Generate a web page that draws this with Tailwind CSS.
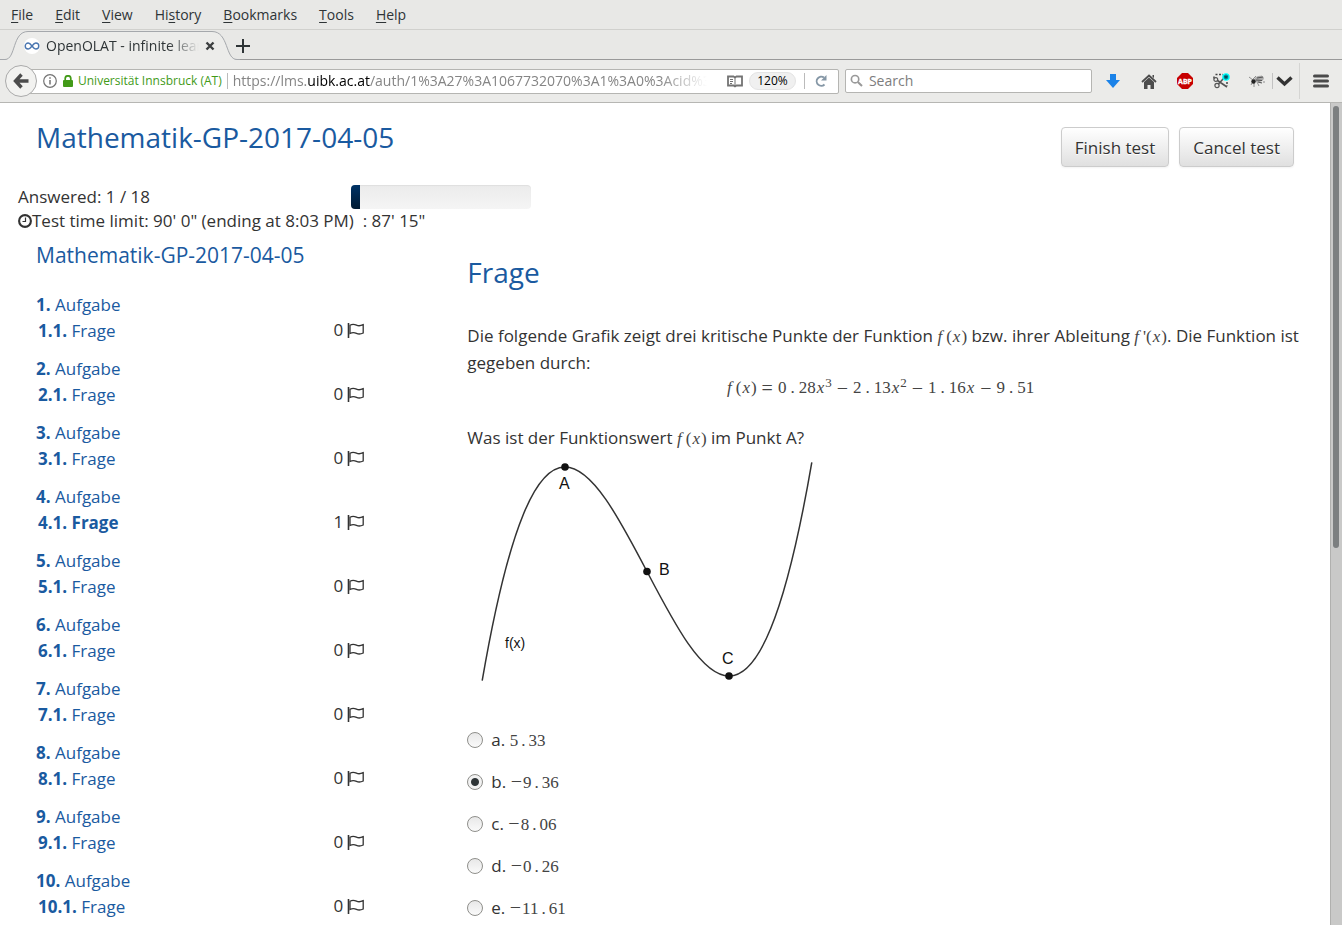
<!DOCTYPE html>
<html lang="en">

<head>
    <meta charset="UTF-8">
    <meta name="viewport" content="width=device-width, initial-scale=1.0">
    <title>OpenOLAT - infinite learning</title>
    <script src="https://cdn.jsdelivr.net/npm/@tailwindcss/browser@4"></script>
</head>

<body class="h-screen flex flex-col overflow-hidden bg-white font-['Open_Sans','Noto_Sans',sans-serif] text-[17px] text-[#333]">
    <!-- Shared icons -->
    <svg class="hidden">
        <symbol id="flag" viewBox="0 0 17 15">
            <path d="M1.5 0v15" stroke="#333" stroke-width="1.6" fill="none" />
            <path d="M3 2.2c3-1.6 4.6-.9 6.5 0s4 .8 6.700-.5v8.300c-2.700 1.300-4.800 1.300-6.700.4s-3.500-1.500-6.500.1z" stroke="#333" stroke-width="1.3" fill="none" />
        </symbol>
    </svg>

    <!-- Browser window -->
    <div class="shrink-0 bg-[#e8e8e6] text-sm text-[#2e3436]">
        <nav class="flex h-[30px] items-center gap-[22px] border-b border-[#d0d0cd] px-[11px]">
            <a href="#"><u class="underline-offset-2">F</u>ile</a>
            <a href="#"><u class="underline-offset-2">E</u>dit</a>
            <a href="#"><u class="underline-offset-2">V</u>iew</a>
            <a href="#">Hi<u class="underline-offset-2">s</u>tory</a>
            <a href="#"><u class="underline-offset-2">B</u>ookmarks</a>
            <a href="#"><u class="underline-offset-2">T</u>ools</a>
            <a href="#"><u class="underline-offset-2">H</u>elp</a>
        </nav>

        <!-- Tabs -->
        <div class="relative flex h-[30px] items-center border-b border-[#999] pt-[2px]">
            <svg class="absolute left-0 top-0" width="240" height="30" viewBox="0 0 240 30">
                <path d="M0 29.5H5C16 29.5 12 1.5 28 1.5H212C229 1.5 225 29.5 237 29.5V30H0z" fill="#ececea" />
                <path d="M0 29.5H5C16 29.5 12 1.5 28 1.5H212C229 1.5 225 29.5 237 29.5H240" fill="none" stroke="#a5a8ac" />
            </svg>
            <div class="relative flex w-[226px] items-center pl-6">
                <svg width="16" height="16" viewBox="0 0 16 16">
                    <circle cx="8" cy="8" r="8" fill="#fff" />
                    <path d="M8 8C6.5 6 5.5 5 4.2 5a3 3 0 0 0 0 6C5.5 11 6.5 10 8 8s2.5-3 3.8-3a3 3 0 0 1 0 6C10.5 11 9.500 10 8 8z" fill="none" stroke="#4a76b0" stroke-width="1.4" />
                </svg>
                <span class="ml-[6px] w-[153px] overflow-hidden whitespace-nowrap mask-r-from-80%">OpenOLAT - infinite learning</span>
                <button class="ml-[6px]" aria-label="Close tab">
                    <svg width="10" height="10" viewBox="0 0 10 10"><path d="M1.5 1.5l7 7M8.5 1.5l-7 7" stroke="#3c3f40" stroke-width="2.4" /></svg>
                </button>
            </div>
            <button class="ml-[10px]" aria-label="New tab">
                <svg width="14" height="14" viewBox="0 0 14 14"><path d="M7 0v14M0 7h14" stroke="#2e3436" stroke-width="2" /></svg>
            </button>
        </div>

        <!-- Toolbar -->
        <div class="flex h-[43px] items-center border-b border-[#b6b6b3] bg-[#ebebe9] pr-[13px]">
            <button class="relative z-10 ml-[5px] flex size-8 items-center justify-center rounded-full border border-[#aaa] bg-[#f2f2f0]" aria-label="Back">
                <svg width="16" height="16" viewBox="0 0 16 16"><path d="M8.5 1.5L2.5 8l6 6.5M3 8h12.5" fill="none" stroke="#4c4c4c" stroke-width="3.4" /></svg>
            </button>
            <div class="-ml-2 flex h-[25px] min-w-0 flex-1 items-center rounded-r-xs border border-[#b5b5b2] bg-white pl-[13px] pr-[11px]">
                <svg class="shrink-0" width="14" height="14" viewBox="0 0 14 14">
                    <circle cx="7" cy="7" r="6.3" fill="none" stroke="#737373" stroke-width="1.2" />
                    <path d="M7 6v4.5M7 3.3v1.5" stroke="#737373" stroke-width="1.5" />
                </svg>
                <svg class="ml-[6px] shrink-0" width="10" height="12" viewBox="0 0 10 12">
                    <path d="M2.2 6V3.6a2.8 2.8 0 0 1 5.6 0V6" fill="none" stroke="#429a18" stroke-width="1.7" />
                    <rect y="5" width="10" height="7" rx="1" fill="#429a18" />
                </svg>
                <span class="ml-[5px] whitespace-nowrap text-xs text-[#429a18]">Universität Innsbruck (AT)</span>
                <span class="ml-[5px] h-4 w-px shrink-0 bg-[#bbb]"></span>
                <div role="textbox" aria-label="Address" class="ml-[5px] min-w-0 flex-1 overflow-hidden whitespace-nowrap text-[#858585] mask-r-from-90%">https://lms.<span class="text-black">uibk.ac.at</span>/auth/1%3A27%3A1067732070%3A1%3A0%3Acid%3Adefault</div>
                <button class="ml-5 shrink-0" aria-label="Reader view">
                    <svg width="16" height="13" viewBox="0 0 16 13">
                        <path d="M1 1.5h5.5L8 2.500l1.500-1H15v9H9.500L8 11.500l-1.500-1H1z" fill="#fff" stroke="#737373" stroke-width="1.8" />
                        <path d="M8 2v9M3 4.500h3M3 6.500h3M3 8.500h2" stroke="#737373" stroke-width="1" />
                    </svg>
                </button>
                <button class="ml-[6px] h-[18px] w-[47px] shrink-0 rounded-full border border-[#e4e4e4] bg-[#f0f0f0] text-xs leading-4 text-black">120%</button>
                <span class="ml-2 h-4 w-px shrink-0 bg-[#bbb]"></span>
                <button class="ml-[10px] shrink-0" aria-label="Reload">
                    <svg width="12" height="12" viewBox="0 0 12 12">
                        <path d="M9.5 9.5A4.6 4.6 0 1 1 9 2.5" fill="none" stroke="#8597a6" stroke-width="1.9" />
                        <path d="M11.5 0v5.5H6z" fill="#8597a6" />
                    </svg>
                </button>
            </div>
            <div class="ml-[6px] flex h-6 w-[247px] items-center gap-[6px] rounded-xs border border-[#b5b5b2] bg-white pl-1">
                <svg width="14" height="14" viewBox="0 0 14 14">
                    <circle cx="5.5" cy="5" r="4" fill="none" stroke="#999" stroke-width="1.8" />
                    <path d="M8.5 8l4.5 4.5" stroke="#999" stroke-width="2.2" />
                </svg>
                <input type="text" aria-label="Search" placeholder="Search" class="w-full outline-none placeholder:text-[#7d7d7d]">
            </div>
            <button class="ml-[14px]" aria-label="Downloads">
                <svg width="14" height="14" viewBox="0 0 14 14"><path d="M4 0h6v6h4l-7 8-7-8h4z" fill="#1a82e8" /></svg>
            </button>
            <button class="ml-[21px]" aria-label="Home">
                <svg width="16" height="15" viewBox="0 0 16 15">
                    <path d="M1 8l7-6.5L15 8" fill="none" stroke="#4c4c4c" stroke-width="1.8" />
                    <path d="M3 8l5-4.5L13 8v7H9.500v-4h-3v4H3zM11.500 1H13v3l-1.500-1z" fill="#4c4c4c" />
                </svg>
            </button>
            <button class="ml-5" aria-label="Adblock Plus">
                <svg width="16" height="16" viewBox="0 0 16 16">
                    <path d="M5 0h6l5 5v6l-5 5H5l-5-5V5z" fill="#c70000" />
                    <text x="8" y="11" text-anchor="middle" font-family="Noto Sans" font-size="7" font-weight="bold" fill="#fff" stroke="#fff" stroke-width=".3">ABP</text>
                </svg>
            </button>
            <button class="ml-5" aria-label="Screenshot">
                <svg width="17" height="16" viewBox="0 0 17 16">
                    <path d="M2.5 1.5H10M1 3.5v3M14 9v4" stroke="#444" stroke-width="1.5" stroke-dasharray="2 1.5" />
                    <circle cx="2.8" cy="6.5" r="1.9" fill="none" stroke="#555" stroke-width="1.2" />
                    <circle cx="4" cy="12.5" r="2.1" fill="none" stroke="#555" stroke-width="1.2" />
                    <path d="M4.5 7.5l9.500 6.500M5.500 11l5-5.500" stroke="#555" stroke-width="1.6" />
                    <circle cx="13" cy="4" r="3.8" fill="#0ff" />
                    <path d="M13 1.500v5M10.800 2.700l4.400 2.600M10.800 5.300l4.400-2.600" stroke="#064a5a" stroke-width="1.2" />
                </svg>
            </button>
            <button class="ml-[19px]" aria-label="Firebug">
                <svg width="16" height="14" viewBox="0 0 16 14">
                    <path d="M0 3l4 3M3 9l-1 2M5 9v4M8 8l2 4M4 5l3-3M8 4l5-2M14 8h2" stroke="#777" stroke-width=".8" />
                    <ellipse cx="10" cy="5" rx="5" ry="3" transform="rotate(-15 10 5)" fill="#aaa" />
                    <circle cx="4.5" cy="7.500" r="2.2" fill="#222" />
                    <path d="M7 6l6 .5M8 4l6-1M9 8l4 1" stroke="#555" stroke-width="1.1" />
                </svg>
            </button>
            <button class="ml-[7px] flex h-4 items-center border-l border-[#c2c2c2] pl-[3px]" aria-label="Firebug menu">
                <svg width="17" height="11" viewBox="0 0 17 11"><path d="M1.5 1.5l7 6.5 7-6.5" fill="none" stroke="#333" stroke-width="3.4" /></svg>
            </button>
            <span class="ml-[6px] h-9 w-px bg-[#d5d5d3]"></span>
            <button class="ml-[13px]" aria-label="Open menu">
                <svg width="16" height="14" viewBox="0 0 16 14"><path d="M1.5 2h13M1.5 7h13M1.5 12h13" stroke="#4a4a4a" stroke-width="3" stroke-linecap="round" /></svg>
            </button>
        </div>
    </div>

    <div class="flex min-h-0 flex-1">
        <main class="min-w-0 flex-1 overflow-hidden">
            <!-- Title and actions -->
            <header class="flex items-start justify-between px-9 pt-4">
                <h1 class="text-[28px] leading-9 text-[#1a5aa0]">Mathematik-GP-2017-04-05</h1>
                <div class="mt-2 flex gap-[10px]">
                    <button class="h-10 rounded-sm border border-[#ccc] bg-linear-to-b from-white to-[#e0e0e0] px-[13px] pt-px shadow-xs text-shadow-2xs text-shadow-white">Finish test</button>
                    <button class="h-10 rounded-sm border border-[#ccc] bg-linear-to-b from-white to-[#e0e0e0] px-[13px] pt-px shadow-xs text-shadow-2xs text-shadow-white">Cancel test</button>
                </div>
            </header>

            <!-- Progress and time limit -->
            <div class="mt-[18px] leading-6">
                <div class="flex">
                    <div class="w-1/4 pl-[18px]">Answered: 1 / 18</div>
                    <div class="ml-[18px] h-6 w-[180px] overflow-hidden rounded-sm bg-linear-to-b from-[#ebebeb] to-[#f5f5f5] inset-shadow-xs">
                        <div class="h-full bg-linear-to-b from-[#003366] to-[#001a33]" style="width: 5%"></div>
                    </div>
                </div>
                <div class="flex items-center pl-[18px]">
                    <svg width="14" height="14" viewBox="0 0 14 14">
                        <circle cx="7" cy="7" r="5.9" fill="none" stroke="#333" stroke-width="2.1" />
                        <path d="M7.5 3.5v4h-3" fill="none" stroke="#333" stroke-width="1.2" />
                    </svg>
                    <span class="whitespace-pre">Test time limit: 90' 0" (ending at 8:03 PM)  : 87' 15"</span>
                </div>
            </div>

            <div class="grid grid-cols-3 pl-9 pt-[9px]">
                <!-- Question list -->
                <aside class="text-[#1a5aa0]">
                    <h2 class="text-[21px] leading-[26px]">Mathematik-GP-2017-04-05</h2>
                    <ul class="mt-6 mr-[103px] space-y-3 leading-[26px]">
                        <li>
                            <a href="#" class="block"><b>1.</b> Aufgabe</a>
                            <div class="flex items-start justify-between pl-[2px]"><a href="#"><b>1.1.</b> Frage</a><span class="flex items-center gap-1 leading-6 text-[#333]">0 <svg width="17" height="15"><use href="#flag" /></svg></span></div>
                        </li>
                        <li>
                            <a href="#" class="block"><b>2.</b> Aufgabe</a>
                            <div class="flex items-start justify-between pl-[2px]"><a href="#"><b>2.1.</b> Frage</a><span class="flex items-center gap-1 leading-6 text-[#333]">0 <svg width="17" height="15"><use href="#flag" /></svg></span></div>
                        </li>
                        <li>
                            <a href="#" class="block"><b>3.</b> Aufgabe</a>
                            <div class="flex items-start justify-between pl-[2px]"><a href="#"><b>3.1.</b> Frage</a><span class="flex items-center gap-1 leading-6 text-[#333]">0 <svg width="17" height="15"><use href="#flag" /></svg></span></div>
                        </li>
                        <li>
                            <a href="#" class="block"><b>4.</b> Aufgabe</a>
                            <div class="flex items-start justify-between pl-[2px]"><a href="#" class="font-bold">4.1. Frage</a><span class="flex items-center gap-1 leading-6 text-[#333]">1 <svg width="17" height="15"><use href="#flag" /></svg></span></div>
                        </li>
                        <li>
                            <a href="#" class="block"><b>5.</b> Aufgabe</a>
                            <div class="flex items-start justify-between pl-[2px]"><a href="#"><b>5.1.</b> Frage</a><span class="flex items-center gap-1 leading-6 text-[#333]">0 <svg width="17" height="15"><use href="#flag" /></svg></span></div>
                        </li>
                        <li>
                            <a href="#" class="block"><b>6.</b> Aufgabe</a>
                            <div class="flex items-start justify-between pl-[2px]"><a href="#"><b>6.1.</b> Frage</a><span class="flex items-center gap-1 leading-6 text-[#333]">0 <svg width="17" height="15"><use href="#flag" /></svg></span></div>
                        </li>
                        <li>
                            <a href="#" class="block"><b>7.</b> Aufgabe</a>
                            <div class="flex items-start justify-between pl-[2px]"><a href="#"><b>7.1.</b> Frage</a><span class="flex items-center gap-1 leading-6 text-[#333]">0 <svg width="17" height="15"><use href="#flag" /></svg></span></div>
                        </li>
                        <li>
                            <a href="#" class="block"><b>8.</b> Aufgabe</a>
                            <div class="flex items-start justify-between pl-[2px]"><a href="#"><b>8.1.</b> Frage</a><span class="flex items-center gap-1 leading-6 text-[#333]">0 <svg width="17" height="15"><use href="#flag" /></svg></span></div>
                        </li>
                        <li>
                            <a href="#" class="block"><b>9.</b> Aufgabe</a>
                            <div class="flex items-start justify-between pl-[2px]"><a href="#"><b>9.1.</b> Frage</a><span class="flex items-center gap-1 leading-6 text-[#333]">0 <svg width="17" height="15"><use href="#flag" /></svg></span></div>
                        </li>
                        <li>
                            <a href="#" class="block"><b>10.</b> Aufgabe</a>
                            <div class="flex items-start justify-between pl-[2px]"><a href="#"><b>10.1.</b> Frage</a><span class="flex items-center gap-1 leading-6 text-[#333]">0 <svg width="17" height="15"><use href="#flag" /></svg></span></div>
                        </li>
                    </ul>
                </aside>

                <!-- Current question -->
                <section class="col-span-2 pr-9 pt-3">
                    <h2 class="text-[28px] leading-9 text-[#1a5aa0]">Frage</h2>
                    <p class="-mr-6 mt-8 leading-[27px]">Die folgende Grafik zeigt drei kritische Punkte der Funktion <span class="font-['Liberation_Serif',serif] leading-none text-[#444]"><i class="pr-1">f</i>(<i class="px-px">x</i>)</span> bzw. ihrer Ableitung <span class="font-['Liberation_Serif',serif] leading-none text-[#444]"><i class="pr-1">f</i>'(<i class="px-px">x</i>)</span>. Die Funktion ist gegeben durch:</p>
                    <p class="flex justify-center gap-[5px] font-['Liberation_Serif',serif] leading-6 text-[#444]">
                        <span><i class="pr-1">f</i>(<i class="px-px">x</i>)</span>
                        <span class="text-xl leading-6">=</span>
                        <span>0<span class="px-1">.</span>28<i class="px-px">x</i><sup class="text-[13px]">3</sup></span>
                        <span class="text-xl leading-6">−</span>
                        <span>2<span class="px-1">.</span>13<i class="px-px">x</i><sup class="text-[13px]">2</sup></span>
                        <span class="text-xl leading-6">−</span>
                        <span>1<span class="px-1">.</span>16<i class="px-px">x</i></span>
                        <span class="text-xl leading-6">−</span>
                        <span>9<span class="px-1">.</span>51</span>
                    </p>
                    <p class="mt-6 leading-[27px]">Was ist der Funktionswert <span class="font-['Liberation_Serif',serif] leading-none text-[#444]"><i class="pr-1">f</i>(<i class="px-px">x</i>)</span> im Punkt A?</p>

                    <svg class="mt-[3px]" width="360" height="240" viewBox="0 0 360 240" font-family="Liberation Sans" fill="#111">
                        <path d="M15.2 226.7C125.1-411.8 234.9 646.8 344.8 8.3" fill="none" stroke="#333" stroke-width="1.5" />
                        <circle cx="98" cy="13" r="3.8" />
                        <circle cx="180" cy="117.5" r="3.8" />
                        <circle cx="262" cy="222" r="3.8" />
                        <text x="92" y="35" font-size="16">A</text>
                        <text x="192" y="121" font-size="16">B</text>
                        <text x="255" y="210" font-size="16">C</text>
                        <text x="38" y="194" font-size="14">f(x)</text>
                    </svg>

                    <!-- Answers -->
                    <div class="mt-[34px] space-y-[18px] leading-6">
                        <div class="flex items-center gap-2">
                            <input type="radio" name="answer" id="a" class="size-4 appearance-none rounded-full border border-[#8f8f8b] bg-linear-to-b from-[#e8e8e8] to-[#fafafa]">
                            <label for="a">a. <span class="font-['Liberation_Serif',serif] leading-none text-[#444]">5<span class="px-[3px]">.</span>33</span></label>
                        </div>
                        <div class="flex items-center gap-2">
                            <input type="radio" name="answer" id="b" checked class="size-4 appearance-none rounded-full border border-[#8f8f8b] bg-[#f2f2f2] checked:bg-radial checked:from-[#2e3436] checked:from-35% checked:to-[#f2f2f2] checked:to-45%">
                            <label for="b">b. <span class="font-['Liberation_Serif',serif] leading-none text-[#444]"><span class="pr-px text-xl leading-none">−</span>9<span class="px-[3px]">.</span>36</span></label>
                        </div>
                        <div class="flex items-center gap-2">
                            <input type="radio" name="answer" id="c" class="size-4 appearance-none rounded-full border border-[#8f8f8b] bg-linear-to-b from-[#e8e8e8] to-[#fafafa]">
                            <label for="c">c. <span class="font-['Liberation_Serif',serif] leading-none text-[#444]"><span class="pr-px text-xl leading-none">−</span>8<span class="px-[3px]">.</span>06</span></label>
                        </div>
                        <div class="flex items-center gap-2">
                            <input type="radio" name="answer" id="d" class="size-4 appearance-none rounded-full border border-[#8f8f8b] bg-linear-to-b from-[#e8e8e8] to-[#fafafa]">
                            <label for="d">d. <span class="font-['Liberation_Serif',serif] leading-none text-[#444]"><span class="pr-px text-xl leading-none">−</span>0<span class="px-[3px]">.</span>26</span></label>
                        </div>
                        <div class="flex items-center gap-2">
                            <input type="radio" name="answer" id="e" class="size-4 appearance-none rounded-full border border-[#8f8f8b] bg-linear-to-b from-[#e8e8e8] to-[#fafafa]">
                            <label for="e">e. <span class="font-['Liberation_Serif',serif] leading-none text-[#444]"><span class="pr-px text-xl leading-none">−</span>11<span class="px-[3px]">.</span>61</span></label>
                        </div>
                    </div>
                </section>
            </div>
        </main>

        <!-- Scrollbar -->
        <div class="w-3 shrink-0 border-l border-[#b0b0ae] bg-[#c9c9c8] px-[2px] pt-[3px]">
            <div class="h-[54%] w-[6px] rounded-full bg-[#7c7f80]"></div>
        </div>
    </div>
</body>

</html>
